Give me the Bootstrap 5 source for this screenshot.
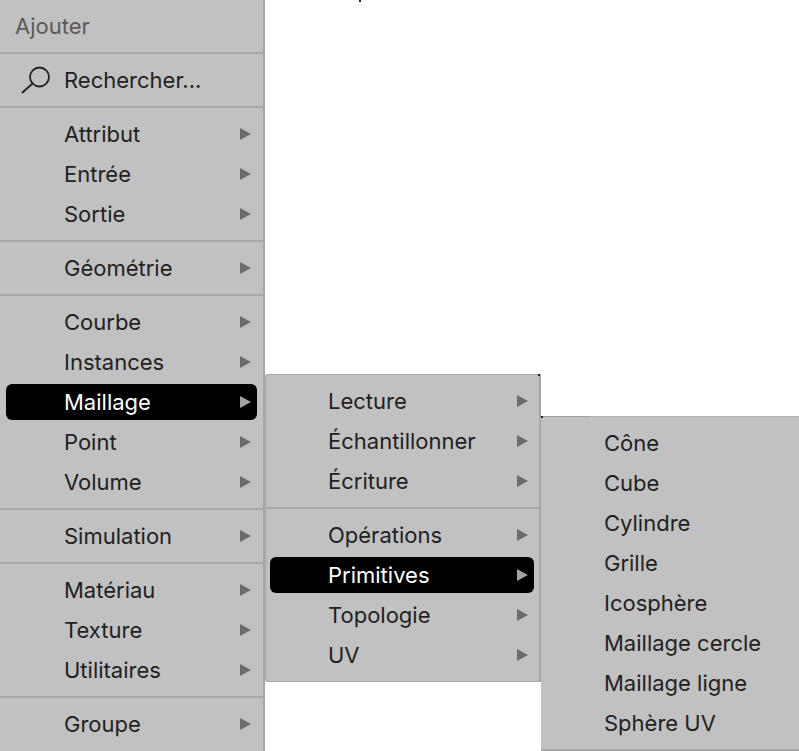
<!DOCTYPE html>
<html lang="fr">
<head>
    <meta charset="UTF-8">
    <meta name="viewport" content="width=device-width, initial-scale=1.0">
    <title>Ajouter</title>
    <link href="https://cdn.jsdelivr.net/npm/bootstrap@5.3.0/dist/css/bootstrap.min.css" rel="stylesheet">
    <style>
        body {
            background-color: #fff;
            overflow: hidden;
            font-family: Inter, "Liberation Sans", sans-serif;
        }
        .menu-window {
            position: absolute;
            background-color: #c1c1c1;
            padding: 6px 0 7px;
            border-style: solid;
            border-color: #a6a6a6;
            border-width: 0;
        }
        .menu-main {
            left: 0;
            top: 0;
            width: 265px;
            height: 751px;
            border-right-width: 2px;
        }
        .menu-sub {
            left: 265px;
            top: 374px;
            width: 276px;
            height: 308px;
            border-width: 1px 2px 1px 0;
            border-bottom-left-radius: 3px;
            border-top-left-radius: 3px;
            box-shadow: inset 2px 0 2px -1px #a6a6a6;
        }
        .menu-leaf {
            left: 541px;
            top: 416px;
            width: 258px;
            height: 335px;
            border-width: 1px 0 2px 0;
            border-top-color: #b2b2b2;
        }
        /* the darker start of the top edge */
        .menu-leaf::before {
            content: "";
            position: absolute;
            left: 0;
            top: -1px;
            width: 50px;
            height: 1px;
            background-color: #a0a0a0;
        }
        .menu-row {
            height: 40px;
            font-size: 22px;
            line-height: 40px;
            color: #222;
            white-space: nowrap;
        }
        .menu-main .menu-row { padding: 0 12px 0 64px; }
        .menu-sub .menu-row { padding: 0 11px 0 63px; }
        .menu-leaf .menu-row { padding-left: 63px; }
        .menu-title {
            padding-left: 15px !important;
            color: #5a5a5a;
        }
        .menu-search {
            position: relative;
        }
        .menu-search svg {
            position: absolute;
            left: 21px;
            top: 6px;
        }
        .menu-rule {
            height: 14px;
            padding-top: 6px;
        }
        .menu-rule::before {
            content: "";
            display: block;
            height: 2px;
            background-color: #a8a8a8;
        }
        .menu-active {
            color: #fff;
            position: relative;
            z-index: 0;
        }
        .menu-active::before {
            content: "";
            position: absolute;
            z-index: -1;
            top: 2px;
            bottom: 2px;
            left: 6px;
            right: 6px;
            background-color: #000;
            border-radius: 6px;
        }
        .menu-sub .menu-active::before {
            left: 5px;
            right: 5px;
        }
        .menu-arrow {
            width: 0;
            height: 0;
            border-style: solid;
            border-width: 6px 0 6px 11px;
            border-color: transparent transparent transparent #6c6c6c;
        }
        .menu-active .menu-arrow {
            border-left-color: #a3a3a3;
        }
        .menu-speck {
            position: absolute;
            width: 2px;
            height: 2px;
            background-color: #222;
        }
        .speck-top { left: 359px; top: 0; }
        .speck-sub { left: 538px; top: 374px; }
        .speck-leaf { left: 541px; top: 416px; }
    </style>
</head>
<body>
    <div class="menu-window menu-main">
        <div class="menu-row menu-title">Ajouter</div>
        <div class="menu-rule"></div>
        <div class="menu-row menu-search">
            <svg width="32" height="30" viewBox="0 0 32 30" fill="none" stroke="#222" stroke-width="1.8">
                <circle cx="18.5" cy="11" r="9.5"/>
                <path d="M11.5 17.5 1.5 26.5" stroke-linecap="round"/>
            </svg>
            Rechercher...
        </div>
        <div class="menu-rule"></div>
        <div class="menu-row d-flex justify-content-between align-items-center">Attribut<span class="menu-arrow"></span></div>
        <div class="menu-row d-flex justify-content-between align-items-center">Entrée<span class="menu-arrow"></span></div>
        <div class="menu-row d-flex justify-content-between align-items-center">Sortie<span class="menu-arrow"></span></div>
        <div class="menu-rule"></div>
        <div class="menu-row d-flex justify-content-between align-items-center">Géométrie<span class="menu-arrow"></span></div>
        <div class="menu-rule"></div>
        <div class="menu-row d-flex justify-content-between align-items-center">Courbe<span class="menu-arrow"></span></div>
        <div class="menu-row d-flex justify-content-between align-items-center">Instances<span class="menu-arrow"></span></div>
        <div class="menu-row menu-active d-flex justify-content-between align-items-center">Maillage<span class="menu-arrow"></span></div>
        <div class="menu-row d-flex justify-content-between align-items-center">Point<span class="menu-arrow"></span></div>
        <div class="menu-row d-flex justify-content-between align-items-center">Volume<span class="menu-arrow"></span></div>
        <div class="menu-rule"></div>
        <div class="menu-row d-flex justify-content-between align-items-center">Simulation<span class="menu-arrow"></span></div>
        <div class="menu-rule"></div>
        <div class="menu-row d-flex justify-content-between align-items-center">Matériau<span class="menu-arrow"></span></div>
        <div class="menu-row d-flex justify-content-between align-items-center">Texture<span class="menu-arrow"></span></div>
        <div class="menu-row d-flex justify-content-between align-items-center">Utilitaires<span class="menu-arrow"></span></div>
        <div class="menu-rule"></div>
        <div class="menu-row d-flex justify-content-between align-items-center">Groupe<span class="menu-arrow"></span></div>
    </div>

    <div class="menu-window menu-sub">
        <div class="menu-row d-flex justify-content-between align-items-center">Lecture<span class="menu-arrow"></span></div>
        <div class="menu-row d-flex justify-content-between align-items-center">Échantillonner<span class="menu-arrow"></span></div>
        <div class="menu-row d-flex justify-content-between align-items-center">Écriture<span class="menu-arrow"></span></div>
        <div class="menu-rule"></div>
        <div class="menu-row d-flex justify-content-between align-items-center">Opérations<span class="menu-arrow"></span></div>
        <div class="menu-row menu-active d-flex justify-content-between align-items-center">Primitives<span class="menu-arrow"></span></div>
        <div class="menu-row d-flex justify-content-between align-items-center">Topologie<span class="menu-arrow"></span></div>
        <div class="menu-row d-flex justify-content-between align-items-center">UV<span class="menu-arrow"></span></div>
    </div>

    <div class="menu-window menu-leaf">
        <div class="menu-row">Cône</div>
        <div class="menu-row">Cube</div>
        <div class="menu-row">Cylindre</div>
        <div class="menu-row">Grille</div>
        <div class="menu-row">Icosphère</div>
        <div class="menu-row">Maillage cercle</div>
        <div class="menu-row">Maillage ligne</div>
        <div class="menu-row">Sphère UV</div>
    </div>

    <span class="menu-speck speck-top"></span>
    <span class="menu-speck speck-sub"></span>
    <span class="menu-speck speck-leaf"></span>

    <script src="https://cdn.jsdelivr.net/npm/bootstrap@5.3.0/dist/js/bootstrap.bundle.min.js"></script>
</body>
</html>
